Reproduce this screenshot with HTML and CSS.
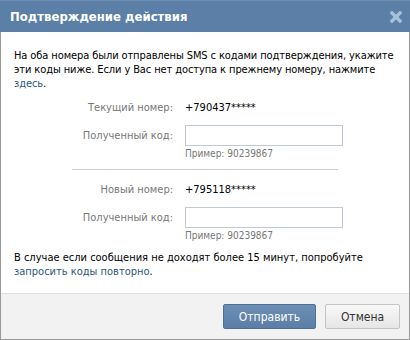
FILE: index.html
```html
<!DOCTYPE html>
<html lang="ru">
<head>
    <meta charset="UTF-8">
    <title>Подтверждение действия</title>
    <link rel="stylesheet" href="styles.css">
</head>
<body>
    <div class="box">
        <div class="box-title">
            <span class="box-title-text">Подтверждение действия</span>
            <a class="box-close" href="#">
                <svg width="12" height="12" viewBox="0 0 12 12">
                    <path d="M2 2 L10 10 M10 2 L2 10" stroke="#a8bfdb" stroke-width="3.4" stroke-linecap="square"/>
                </svg>
            </a>
        </div>

        <div class="box-body">
            <div class="box-content">
                <p class="intro">На оба номера были отправлены SMS с кодами подтверждения, укажите эти коды ниже. Если у Вас нет доступа к прежнему номеру, нажмите <a href="#">здесь</a>.</p>

                <!-- Current phone -->
                <div class="phone-block">
                    <div class="field-row">
                        <div class="field-label">Текущий номер:</div>
                        <div class="field-value">+790437*****</div>
                    </div>
                    <div class="field-row">
                        <div class="field-label">Полученный код:</div>
                        <input type="text" class="code-input">
                    </div>
                    <div class="field-row">
                        <div></div>
                        <div class="field-hint">Пример: 90239867</div>
                    </div>
                </div>

                <div class="separator"></div>

                <!-- New phone -->
                <div class="phone-block">
                    <div class="field-row">
                        <div class="field-label">Новый номер:</div>
                        <div class="field-value">+795118*****</div>
                    </div>
                    <div class="field-row">
                        <div class="field-label">Полученный код:</div>
                        <input type="text" class="code-input">
                    </div>
                    <div class="field-row">
                        <div></div>
                        <div class="field-hint">Пример: 90239867</div>
                    </div>
                </div>

                <p class="outro">В случае если сообщения не доходят более 15 минут, попробуйте <a href="#">запросить коды повторно</a>.</p>
            </div>

            <div class="box-footer">
                <button class="button button-blue">Отправить</button>
                <button class="button button-gray">Отмена</button>
            </div>
        </div>
    </div>
</body>
</html>
```

FILE: styles.css
```css
/* General Styles */
body {
    margin: 0;
    padding: 0;
    background: #fff;
    font-family: "DejaVu Sans Condensed", "DejaVu Sans", sans-serif;
    font-stretch: condensed;
    font-size: 11px;
    color: #000;
}

a {
    color: #2b587a;
    text-decoration: none;
}

/* Box */
.box {
    width: 410px;
    height: 340px;
    display: flex;
    flex-direction: column;
    box-sizing: border-box;
}

.box-title {
    height: 32px;
    flex-shrink: 0;
    display: flex;
    align-items: center;
    justify-content: space-between;
    padding: 0 8px 0 10px;
    background: #5b7fa6;
    border-top: 1px solid #6a8cb1;
    box-sizing: border-box;
}

.box-title-text {
    color: #fff;
    font-size: 13px;
    font-weight: bold;
}

.box-close {
    display: flex;
}

.box-body {
    flex: 1;
    display: flex;
    flex-direction: column;
    border-left: 1px solid #999;
    border-right: 1px solid #999;
    border-bottom: 1px solid #999;
}

.box-content {
    flex: 1;
    padding: 17px 4px 0 13px;
}

.intro, .outro {
    margin: 0;
    line-height: 14px;
}

.intro {
    letter-spacing: -0.1px;
}

/* Form rows */
.phone-block {
    margin-top: 10px;
}

.field-row {
    display: grid;
    grid-template-columns: 159px 158px;
    column-gap: 12px;
    align-items: center;
    margin-bottom: 10px;
}

.field-row:last-child {
    margin-bottom: 0;
}

.field-label {
    text-align: right;
    color: #777;
    line-height: 14px;
}

.field-value {
    line-height: 14px;
}

.code-input {
    width: 158px;
    height: 21px;
    padding: 2px 3px;
    border: 1px solid #c0cad5;
    box-sizing: border-box;
    font-family: inherit;
    font-size: 11px;
}

.field-row + .field-row:last-child {
    margin-top: -8px;
}

.field-hint {
    font-size: 10px;
    color: #777;
    line-height: 12px;
}

.separator {
    width: 266px;
    height: 1px;
    margin: 9px 0 0 58px;
    background: #c5cdd8;
}

.separator + .phone-block {
    margin-top: 13px;
}

.outro {
    margin-top: 9px;
}

/* Footer */
.box-footer {
    height: 46px;
    display: flex;
    align-items: center;
    justify-content: flex-end;
    gap: 9px;
    padding-right: 9px;
    background: #f2f2f2;
    border-top: 1px solid #dce1e8;
    box-sizing: border-box;
}

.button {
    height: 25px;
    padding: 0;
    font-family: inherit;
    font-size: 12px;
    border-radius: 2px;
    cursor: pointer;
}

.button-blue {
    width: 93px;
    color: #fff;
    background: linear-gradient(#6d8fb4, #5a7ea6);
    border: 1px solid #4d7098;
}

.button-gray {
    width: 75px;
    color: #333;
    background: linear-gradient(#f8f8f8, #e6e6e6);
    border: 1px solid #c4c4c4;
}
```
